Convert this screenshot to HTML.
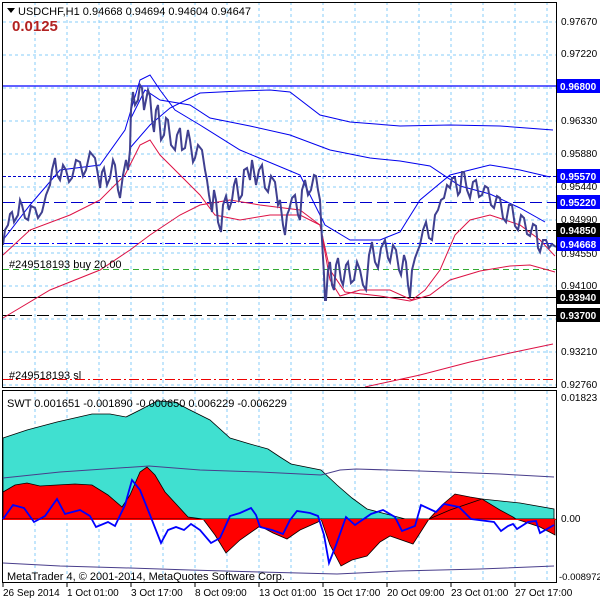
<!DOCTYPE html><html><head><style>body{margin:0;background:#fff}svg{display:block}text{font-family:"Liberation Sans",sans-serif}</style></head><body>
<svg width="600" height="600" viewBox="0 0 600 600" xmlns="http://www.w3.org/2000/svg" font-size="10">
<rect width="600" height="600" fill="#fff"/>
<g stroke="#87cefa" stroke-dasharray="3,3" stroke-width="1">
<path d="M35 2V387M67 2V387M99 2V387M131 2V387M163 2V387M195 2V387M227 2V387M259 2V387M291 2V387M323 2V387M355 2V387M387 2V387M419 2V387M451 2V387M483 2V387M515 2V387M547 2V387"/>
<path d="M35 391V582M67 391V582M99 391V582M131 391V582M163 391V582M195 391V582M227 391V582M259 391V582M291 391V582M323 391V582M355 391V582M387 391V582M419 391V582M451 391V582M483 391V582M515 391V582M547 391V582"/>
<path d="M3 22H556M3 55H556M3 88H556M3 121H556M3 154H556M3 187H556M3 220H556M3 253H556M3 286H556M3 319H556M3 352H556M3 385H556"/>
</g>
<path d="M3 86H556" stroke="#0000ff" stroke-width="1.2"/>
<path d="M3 176.5H556" stroke="#0000cc" stroke-dasharray="3,2"/>
<path d="M3 202.5H556" stroke="#0000cc" stroke-dasharray="12,5"/>
<path d="M3 230.5H556" stroke="#000" stroke-dasharray="3,2"/>
<path d="M3 243.5H556" stroke="#0000ff" stroke-dasharray="10,3,2,3"/>
<path d="M3 246.5H556" stroke="#87cefa"/>
<path d="M3 269.5H556" stroke="#33aa33" stroke-dasharray="6,4"/>
<path d="M3 297.5H556" stroke="#000"/>
<path d="M3 315.5H556" stroke="#000" stroke-dasharray="12,5"/>
<path d="M3 379.5H556" stroke="#e00" stroke-dasharray="10,3,2,3"/>
<g fill="none" stroke-width="1">
<polyline stroke="#0000ee" points="3,240 30,205 60,170 100,165 125,130 140,80 150,75 160,90 175,110 200,125 240,150 300,175 325,225 350,240 380,240 400,232 420,200 450,175 490,165 520,170 550,177"/>
<polyline stroke="#0000ee" points="130,148 150,125 170,108 200,93 240,91 270,90 290,92 320,115 350,122 400,126 450,125 500,126 553,130"/>
<polyline stroke="#0000ee" points="130,120 145,90 160,100 190,105 210,118 230,122 250,126 290,135 330,150 370,158 400,161 430,166 460,186 490,194 520,208 545,222"/>
<polyline stroke="#dd1144" points="3,255 30,230 70,215 100,200 125,175 140,145 150,140 160,155 180,175 200,195 215,215 240,220 270,215 300,215 320,225 330,280 340,296 360,290 390,290 412,300 425,290 440,270 455,235 470,220 490,215 520,225 540,240 555,256"/>
<polyline stroke="#dd1144" points="3,318 50,290 100,270 130,250 150,235 180,215 200,205 230,200 260,205 300,210 320,225 330,270 345,292 380,296 410,301 430,295 450,280 480,271 510,266 530,265 555,272"/>
<polyline stroke="#dd1144" points="365,387 420,375 470,362 510,353 553,344"/>
</g>
<polyline fill="none" stroke="#404090" stroke-width="2" points="3,245 5,230 8,225 10,214 12,212 14,222 18,215 20,200 22,205 25,218 28,220 31,206 35,208 38,218 42,212 46,195 50,185 52,170 55,158 57,175 60,180 63,165 66,170 69,182 72,178 76,160 80,162 83,176 86,170 90,152 95,158 98,175 100,188 102,172 104,168 107,185 110,178 113,160 115,165 118,190 120,198 123,175 126,160 128,170 130,150 131,110 133,92 135,105 138,100 140,85 142,88 144,110 146,100 148,90 150,96 152,120 154,132 156,110 158,105 161,140 164,135 166,118 168,120 171,145 175,150 177,135 180,128 182,150 185,148 188,130 190,140 193,162 195,158 198,145 202,150 205,170 207,180 209,195 212,212 214,190 216,200 218,222 221,232 223,205 226,196 229,210 232,200 234,185 236,178 239,200 242,195 244,170 247,168 250,180 252,160 254,172 256,185 259,170 262,165 265,188 268,192 271,176 275,182 278,205 280,200 283,225 285,235 287,215 289,210 292,198 295,195 298,215 300,220 302,190 305,180 308,195 311,190 314,175 316,176 318,190 320,200 322,240 324,275 325,300 326,300 328,270 330,262 332,285 334,290 336,265 338,258 341,280 343,285 346,265 348,262 351,283 354,280 357,262 360,270 363,285 366,290 369,255 372,242 375,262 378,268 381,248 385,240 388,258 390,262 393,245 396,250 399,270 401,275 404,255 406,262 408,285 410,297 412,270 415,258 418,250 420,245 423,230 426,222 429,238 432,240 435,215 438,210 441,200 444,198 447,185 450,188 452,178 455,178 458,195 460,192 462,172 464,172 467,190 470,198 473,182 476,180 479,197 482,195 485,186 488,188 491,205 494,208 497,196 500,198 503,218 506,222 509,205 512,205 515,226 518,230 521,215 524,218 527,234 530,236 533,224 536,226 538,248 540,252 543,240 546,240 549,248 552,244 556,247"/>
<rect x="2.5" y="2.5" width="554" height="385" fill="none" stroke="#000"/>
<rect x="2.5" y="390.5" width="554" height="192" fill="none" stroke="#000"/>
<path d="M7 8h8l-4 5z" fill="#000"/>
<text x="18" y="15" style="font-size:11px">USDCHF,H1  0.94668 0.94694 0.94604 0.94647</text>
<text x="12" y="31" style="font-size:15px;font-weight:bold" fill="#b22222">0.0125</text>
<text x="9" y="268" style="font-size:11px">#249518193 buy 20.00</text>
<text x="9" y="379" style="font-size:11px">#249518193 sl</text>
<g>
<text x="561" y="25">0.97670</text><text x="561" y="57">0.97220</text><text x="561" y="124">0.96330</text><text x="561" y="157">0.95880</text><text x="561" y="190">0.95440</text><text x="561" y="223">0.94990</text><text x="561" y="257">0.94550</text><text x="561" y="289">0.94100</text><text x="561" y="355">0.93210</text><text x="561" y="388">0.92760</text>
<text x="561" y="401">0.01823</text><text x="561" y="522">0.00</text><text x="559" y="580" style="font-size:9.5px">-0.008972</text>
</g>
<g font-weight="bold" fill="#fff">
<rect x="557" y="79" width="43" height="14" fill="#0000ff"/><text x="560" y="90">0.96800</text>
<rect x="557" y="169" width="43" height="14" fill="#0000ff"/><text x="560" y="180">0.95570</text>
<rect x="557" y="195" width="43" height="14" fill="#0000ff"/><text x="560" y="206">0.95220</text>
<rect x="557" y="223" width="43" height="14" fill="#000"/><text x="560" y="234">0.94850</text>
<rect x="557" y="237" width="43" height="14" fill="#0000ff"/><text x="560" y="248">0.94668</text>
<rect x="557" y="290" width="43" height="14" fill="#000"/><text x="560" y="301">0.93940</text>
<rect x="557" y="308" width="43" height="14" fill="#000"/><text x="560" y="319">0.93700</text>
</g>
<polygon fill="#40e0d0" stroke="#000" stroke-width="0.8" points="3,438 27,430 57,422 92,414 110,414 126,417 140,410 157,401 175,402 188,409 210,420 230,438 250,444 268,449 280,457 291,464 321,470 337,485 352,498 367,509 390,515 413,521 429,519 455,500 482,499 520,503 554,509 554,519 3,519"/>
<polygon fill="#ff0000" stroke="#000" stroke-width="0.8" points="3,492 15,485 27,483 40,486 57,485 75,484 92,485 108,495 122,507 130,495 140,472 147,467 155,475 165,492 177,505 188,517 203,519 3,519"/>
<polygon fill="#ff0000" stroke="#000" stroke-width="0.8" points="203,519 215,535 226,553 240,540 260,526 273,533 287,539 300,530 318,522 321,519 330,545 341,566 352,560 367,556 380,542 390,536 413,544 429,519"/>
<polygon fill="#ff0000" stroke="#000" stroke-width="0.8" points="429,519 442,505 455,494 470,497 482,499 500,510 513,517 516,519"/>
<polygon fill="#ff0000" stroke="#000" stroke-width="0.8" points="516,519 540,527 555,535 555,519"/>
<path d="M3 519.5H556" stroke="#ff0000" stroke-width="1"/>
<polyline fill="none" stroke="#000" stroke-width="0.8" points="429,519 450,510 482,499"/>
<polyline fill="none" stroke="#483d8b" stroke-width="1" points="3,478 60,472 149,466 200,470 260,472 321,475 340,470 356,469 420,471 500,474 554,477"/>
<polyline fill="none" stroke="#483d8b" stroke-width="1" points="3,563 60,566 130,568 190,570 260,572 337,574 400,571 480,569 554,566"/>
<polyline fill="none" stroke="#0000ff" stroke-width="1.8" points="3,519 13,505 24,508 34,522 45,516 57,499 65,514 80,510 90,516 96,527 108,522 115,526 125,505 132,480 140,490 150,515 161,543 168,530 176,527 184,530 191,524 200,530 211,543 220,538 230,516 240,513 251,508 256,515 260,527 272,530 283,534 290,520 297,511 310,513 318,516 324,535 329,563 336,545 346,517 355,525 371,514 383,510 395,517 402,531 415,526 421,505 436,512 444,504 459,507 471,519 494,522 501,531 508,526 513,524 517,529 528,522 536,521 540,533 554,525"/>
<text x="7" y="407" style="font-size:11px">SWT 0.001651 -0.001890 -0.000650 0.006229 -0.006229</text>
<text x="7" y="580" style="font-size:11px">MetaTrader 4, © 2001-2014, MetaQuotes Software Corp.</text>
<path d="M3 583v4M67 583v4M131 583v4M195 583v4M259 583v4M323 583v4M387 583v4M451 583v4M515 583v4" stroke="#000"/>
<g style="font-size:10px">
<text x="3" y="596">26 Sep 2014</text><text x="67" y="596">1 Oct 01:00</text><text x="131" y="596">3 Oct 17:00</text><text x="195" y="596">8 Oct 09:00</text><text x="259" y="596">13 Oct 01:00</text><text x="323" y="596">15 Oct 17:00</text><text x="387" y="596">20 Oct 09:00</text><text x="451" y="596">23 Oct 01:00</text><text x="515" y="596">27 Oct 17:00</text>
</g>
</svg>
</body></html>
